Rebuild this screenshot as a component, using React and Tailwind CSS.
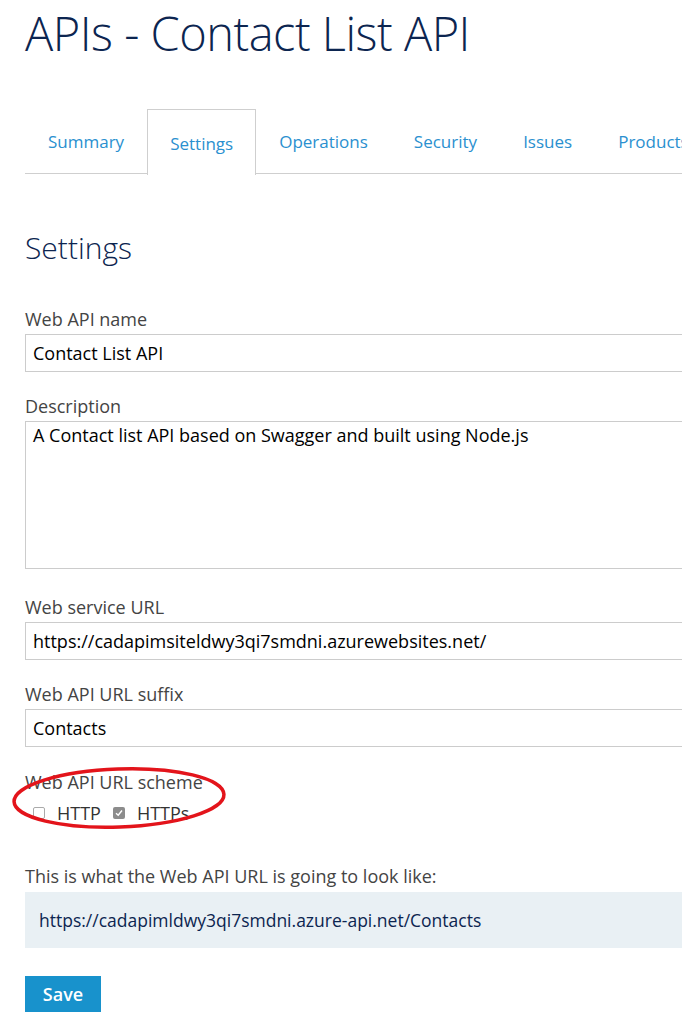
import React from 'react'

const font = { fontFamily: '"Open Sans", "Noto Sans", sans-serif' }

const tabs = ['Summary', 'Settings', 'Operations', 'Security', 'Issues', 'Products']

function Label({ children, className = '' }) {
  return <div className={`text-[18px] leading-[24px] text-[#444] ${className}`}>{children}</div>
}

function TextBox({ value, tall }) {
  return (
    <div
      className={`mt-[3px] border border-[#ccc] bg-white px-[7px] text-[18px] text-black whitespace-nowrap ${
        tall ? 'h-[148px] pt-[1px] leading-[24px]' : 'h-[38px] leading-[36px]'
      }`}
    >
      {value}
    </div>
  )
}

function Check({ checked, label }) {
  return (
    <div className="flex items-center">
      {checked ? (
        <span className="w-[12px] h-[12px] rounded-[2px] bg-[#8c8c8c] flex items-center justify-center">
          <svg width="8" height="8" viewBox="0 0 8 8">
            <path d="M1 4.2 L3.2 6.2 L7 1.5" fill="none" stroke="#fff" strokeWidth="1.4" />
          </svg>
        </span>
      ) : (
        <span className="w-[12px] h-[12px] rounded-[2px] border border-[#aaa] bg-white" />
      )}
      <span className="ml-[12px] text-[18px] leading-[24px] text-[#333]">{label}</span>
    </div>
  )
}

export default function App() {
  return (
    <div className="w-[682px] h-[1032px] overflow-hidden bg-white" style={font}>
      <div className="relative pl-[25px] w-[700px]">
        {/* Title */}
        <h1 className="pt-[2px] text-[47px] leading-[62px] font-light text-[#0c2550] tracking-[-0.5px]">
          APIs - Contact List API
        </h1>

        {/* Tabs */}
        <div className="mt-[45px] flex h-[65px] border-b border-[#cfcfcf] whitespace-nowrap">
          {tabs.map((t) => (
            <div
              key={t}
              className={`px-[22px] text-[17px] text-[#2a90cf] ${
                t === 'Settings'
                  ? 'border border-b-0 border-[#cfcfcf] bg-white -mb-px h-[66px] pt-[21px]'
                  : 'pt-[19px] border border-transparent'
              }`}
            >
              {t}
            </div>
          ))}
        </div>

        {/* Section */}
        <h2 className="mt-[56px] text-[30px] leading-[36px] font-light text-[#0c2550]">Settings</h2>

        <div className="w-[670px]">
          <Label className="mt-[41px]">Web API name</Label>
          <TextBox value="Contact List API" />

          <Label className="mt-[22px]">Description</Label>
          <TextBox tall value="A Contact list API based on Swagger and built using Node.js" />

          <Label className="mt-[26px]">Web service URL</Label>
          <TextBox value="https://cadapimsiteldwy3qi7smdni.azurewebsites.net/" />

          <Label className="mt-[22px]">Web API URL suffix</Label>
          <TextBox value="Contacts" />

          <div className="relative mt-[23px]">
            <Label>Web API URL scheme</Label>
            <div className="mt-[7px] ml-[8px] flex items-center gap-[12px]">
              <Check label="HTTP" />
              <Check checked label="HTTPs" />
            </div>
            <svg
              className="absolute left-[-14px] top-[-8px] pointer-events-none"
              width="220"
              height="72"
              viewBox="0 0 220 72"
            >
              <ellipse
                cx="108"
                cy="36"
                rx="105"
                ry="29"
                transform="rotate(-2 108 36)"
                fill="none"
                stroke="#e3141b"
                strokeWidth="3.5"
              />
            </svg>
          </div>

          <Label className="mt-[39px]">This is what the Web API URL is going to look like:</Label>
          <div className="mt-[4px] h-[56px] bg-[#e9f0f4] pl-[14px] flex items-center text-[17.5px] text-[#0c2550] whitespace-nowrap">
            https://cadapimldwy3qi7smdni.azure-api.net/Contacts
          </div>

          <button className="mt-[28px] h-[36px] w-[76px] bg-[#1892cc] text-white text-[18px] font-semibold">
            Save
          </button>
        </div>
      </div>
    </div>
  )
}
